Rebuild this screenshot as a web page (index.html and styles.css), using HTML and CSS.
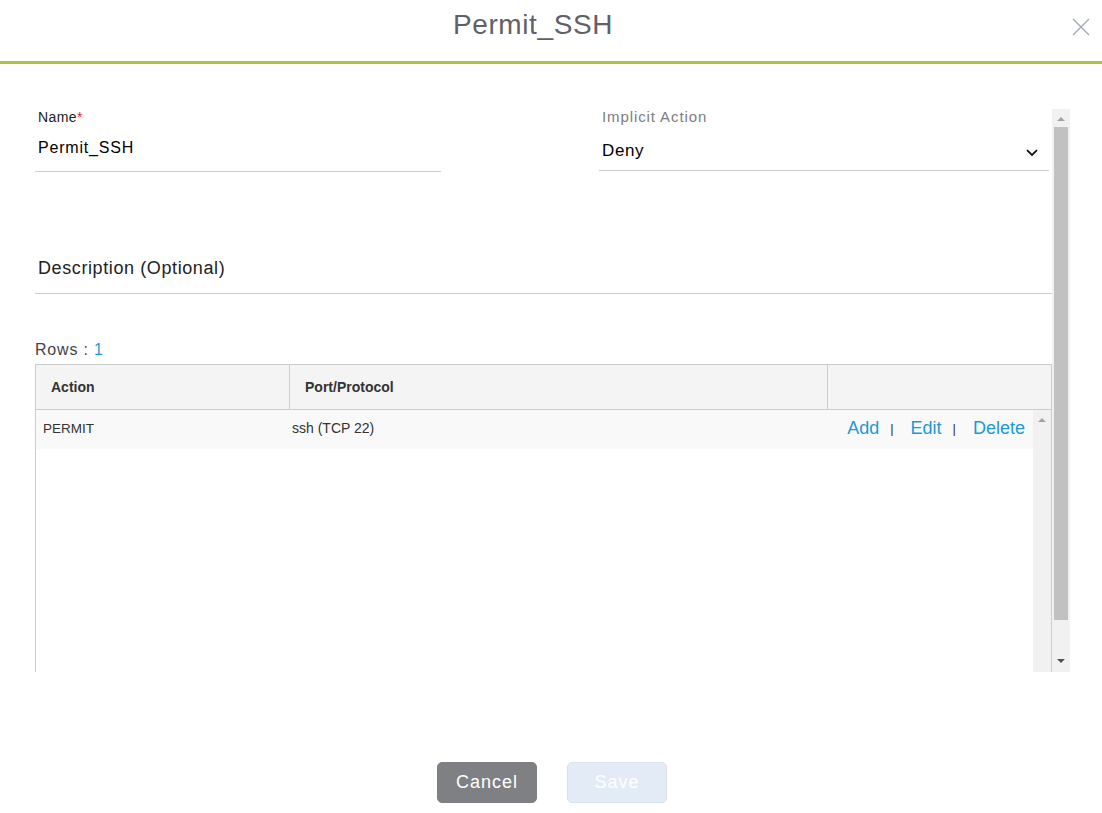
FILE: index.html
```html
<!DOCTYPE html>
<html lang="en">
<head>
<meta charset="utf-8">
<title>Permit_SSH</title>
<link rel="stylesheet" href="styles.css">
</head>
<body>
<div class="modal">
  <header class="modal-head">
    <h1 class="modal-title">Permit_SSH</h1>
    <button class="close-btn" aria-label="Close">
      <svg width="18" height="18" viewBox="0 0 18 18"><path d="M1 1 L17 17 M17 1 L1 17" stroke="#a2abb6" stroke-width="1.4" fill="none"/></svg>
    </button>
  </header>

  <div class="scroll-area">
    <div class="content">
      <div class="fields">
        <div class="field field-name">
          <label class="field-label">Name<span class="req">*</span></label>
          <div class="field-value">Permit_SSH</div>
        </div>
        <div class="field field-action">
          <label class="field-label muted">Implicit Action</label>
          <div class="field-value select">
            <span>Deny</span>
            <svg class="chevron" width="12" height="8" viewBox="0 0 12 8"><path d="M1 1.2 L6 6 L11 1.2" stroke="#111" stroke-width="1.8" fill="none"/></svg>
          </div>
        </div>
      </div>

      <div class="description">Description (Optional)</div>

      <div class="rows-count">Rows : <span class="num">1</span></div>

      <div class="table">
        <div class="thead">
          <div class="th th-action">Action</div>
          <div class="th th-port">Port/Protocol</div>
          <div class="th th-ops"></div>
        </div>
        <div class="tbody">
          <div class="rows">
            <div class="tr">
              <div class="td td-action">PERMIT</div>
              <div class="td td-port">ssh (TCP 22)</div>
              <div class="td td-ops">
                <a class="link">Add</a><span class="sep">|</span><a class="link">Edit</a><span class="sep">|</span><a class="link">Delete</a>
              </div>
            </div>
          </div>
          <div class="scrollbar inner">
            <span class="arrow up"></span>
          </div>
        </div>
      </div>
    </div>
    <div class="scrollbar outer">
      <span class="arrow up"></span>
      <span class="thumb"></span>
      <span class="arrow down"></span>
    </div>
  </div>

  <footer class="modal-foot">
    <button class="btn btn-cancel">Cancel</button>
    <button class="btn btn-save" disabled>Save</button>
  </footer>
</div>
</body>
</html>
```

FILE: styles.css
```css
* { box-sizing: border-box; }

html, body {
  margin: 0;
  padding: 0;
  background: #ffffff;
  font-family: "Liberation Sans", Arial, sans-serif;
  color: #222;
}

.modal {
  width: 1102px;
  height: 813px;
  position: relative;
}

.modal-head {
  height: 64px;
  border-bottom: 3px solid #abc23a;
  display: flex;
  justify-content: center;
  padding-right: 36px;
  padding-top: 5px;
}

.modal-title {
  margin: 0;
  font-size: 28px;
  line-height: 40px;
  font-weight: 400;
  color: #616165;
  letter-spacing: 0.6px;
}

.close-btn {
  position: absolute;
  top: 18px;
  right: 12px;
  width: 18px;
  height: 18px;
  padding: 0;
  border: 0;
  background: none;
  display: block;
}
.close-btn svg { display: block; }

.scroll-area {
  margin-top: 45px;
  height: 563px;
  width: 1070px;
  padding-left: 35px;
  display: flex;
  overflow: hidden;
}

.content {
  width: 1017px;
  flex: none;
}

.fields {
  display: flex;
  justify-content: space-between;
}

.field-name { width: 406px; }
.field-action { width: 450px; margin-right: 3px; }

.field-label {
  display: block;
  font-size: 14px;
  line-height: 16px;
  letter-spacing: 0.4px;
  color: #222;
  padding-left: 3px;
}
.field-label.muted {
  font-size: 15px;
  color: #7d7d80;
  letter-spacing: 0.9px;
  line-height: 15px;
}
.req { color: #e2231a; }

.field-value {
  margin-top: 13px;
  font-size: 16px;
  line-height: 20px;
  letter-spacing: 0.8px;
  color: #000;
  padding: 0 0 13px 3px;
  border-bottom: 1px solid #cdcdcd;
}
.field-action .field-value {
  margin-top: 17px;
  padding-bottom: 9px;
  font-size: 17px;
  letter-spacing: 0.6px;
}

.select {
  display: flex;
  justify-content: space-between;
  align-items: center;
}
.chevron { margin-right: 11px; margin-top: 3px; }

.description {
  margin-top: 85px;
  font-size: 18px;
  line-height: 22px;
  letter-spacing: 0.6px;
  color: #222;
  padding: 0 0 14px 3px;
  border-bottom: 1px solid #cdcdcd;
}

.rows-count {
  margin-top: 46px;
  font-size: 16px;
  line-height: 19px;
  letter-spacing: 0.8px;
  color: #444;
}
.rows-count .num { color: #1d9ad6; }

.table {
  margin-top: 5px;
  border: 1px solid #cccccc;
  border-bottom: 0;
  width: 1017px;
}

.thead {
  display: flex;
  height: 45px;
  background: #f4f4f4;
  border-bottom: 1px solid #cccccc;
}
.th {
  font-size: 14px;
  font-weight: 700;
  color: #333;
  padding-left: 15px;
  padding-bottom: 1px;
  display: flex;
  align-items: center;
}
.th-action { width: 254px; border-right: 1px solid #cccccc; }
.th-port { width: 538px; border-right: 1px solid #cccccc; }
.th-ops { flex: 1; }

.tbody {
  display: flex;
  height: 300px;
}
.rows { flex: 1; }

.tr {
  height: 39px;
  padding-bottom: 3px;
  background: #f9f9f9;
  display: grid;
  grid-template-columns: 249px 1fr auto;
  align-items: center;
}
.td { font-size: 14px; color: #333; }
.td-action { padding-left: 7px; font-size: 13.5px; }
.td-port { padding-left: 7px; }
.td-ops {
  padding-right: 8px;
  display: flex;
  align-items: center;
}
.link {
  font-size: 18px;
  color: #1d9ad6;
  cursor: pointer;
}
.sep {
  font-size: 13px;
  color: #333;
  margin: 1px 17px 0 11px;
}

.scrollbar {
  width: 18px;
  flex: none;
  background: #f1f1f1;
  display: flex;
  flex-direction: column;
  align-items: center;
}
.scrollbar.inner { padding-top: 8px; }
.scrollbar.outer { padding-top: 8px; }

.arrow {
  width: 0;
  height: 0;
  border-left: 4px solid transparent;
  border-right: 4px solid transparent;
}
.arrow.up { border-bottom: 4px solid #a3a3a3; }
.arrow.down { border-top: 4px solid #505050; margin-top: 39px; }

.thumb {
  margin-top: 6px;
  width: 14px;
  height: 493px;
  background: #c1c1c1;
}

.modal-foot {
  margin-top: 90px;
  padding-left: 2px;
  display: flex;
  justify-content: center;
  gap: 30px;
}

.btn {
  width: 100px;
  height: 41px;
  border-radius: 5px;
  font-family: "Liberation Sans", Arial, sans-serif;
  font-size: 18px;
  letter-spacing: 1px;
  color: #ffffff;
  padding: 0;
}
.btn-cancel {
  background: #7f8084;
  border: 1px solid #7f8084;
}
.btn-save {
  background: #e3ebf6;
  border: 1px solid #d8e2ef;
}
```
